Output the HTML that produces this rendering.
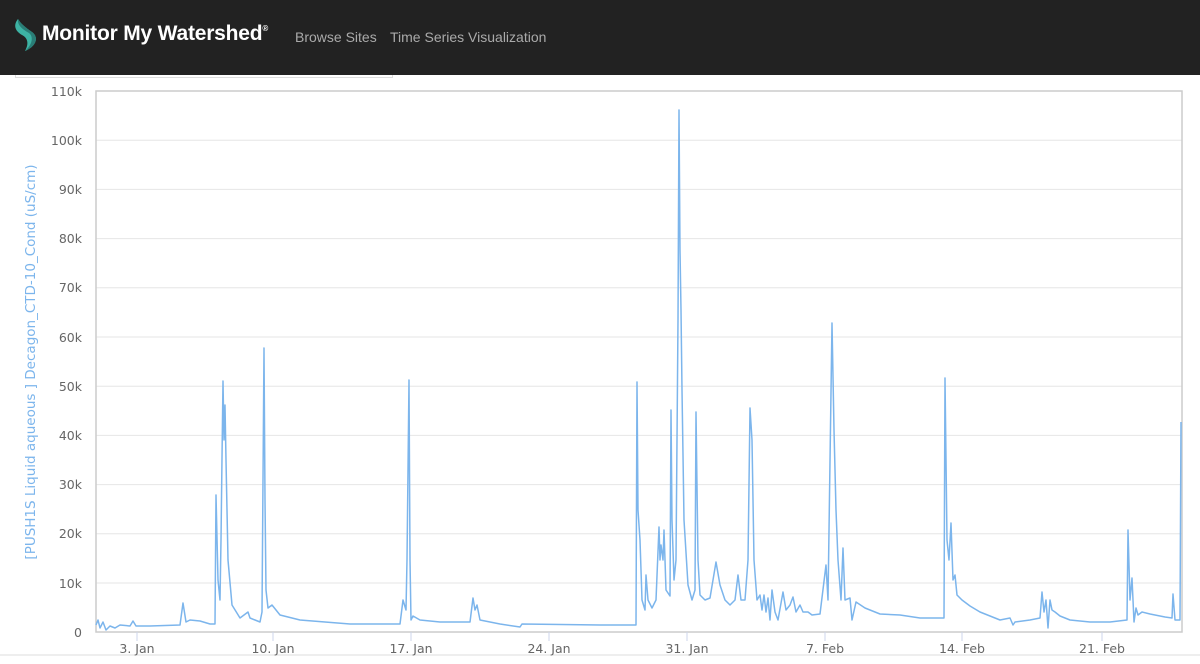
<!DOCTYPE html>
<html><head><meta charset="utf-8"><style>
body{margin:0;width:1200px;height:664px;overflow:hidden;background:#fff;font-family:"Liberation Sans",sans-serif;position:relative}
.hdr{position:absolute;left:0;top:0;width:1200px;height:75px;background:#222}
.brand{position:absolute;left:42px;top:22px;color:#fff;font-weight:bold;font-size:21px;letter-spacing:-0.2px}
.brand sup{font-size:8px;vertical-align:top;position:relative;top:2px}
.nav{position:absolute;top:29px;color:#aaa;font-size:14px}
</style></head><body>
<div class="hdr">
<svg style="position:absolute;left:13px;top:18px" width="30" height="34" viewBox="0 0 30 34">
<path d="M5 1 C0 7 2 13 9 17 C15 20 16 26 12 33 C22 29 27 20 19 14 C12 9 8 6 5 1Z" fill="#3db3a4"/>
<path d="M5 1 C4 8 11 12 16 15 C21 19 19 27 12 33 C22 29 27 20 19 14 C12 9 8 6 5 1Z" fill="#2a7e77"/>
</svg>
<div class="brand">Monitor My Watershed<sup>®</sup></div>
<div class="nav" style="left:295px">Browse Sites</div>
<div class="nav" style="left:390px">Time Series Visualization</div>
</div>
<div style="position:absolute;left:15px;top:75px;width:376px;height:2px;border:1px solid #ddd;border-top:none"></div>
<svg style="position:absolute;left:0;top:0" width="1200" height="664" font-family="DejaVu Sans, sans-serif">
<g stroke="#e6e6e6" stroke-width="1">
<line x1="96" x2="1182" y1="140.2" y2="140.2"/><line x1="96" x2="1182" y1="189.4" y2="189.4"/>
<line x1="96" x2="1182" y1="238.6" y2="238.6"/><line x1="96" x2="1182" y1="287.8" y2="287.8"/>
<line x1="96" x2="1182" y1="337" y2="337"/><line x1="96" x2="1182" y1="386.2" y2="386.2"/>
<line x1="96" x2="1182" y1="435.4" y2="435.4"/><line x1="96" x2="1182" y1="484.6" y2="484.6"/>
<line x1="96" x2="1182" y1="533.8" y2="533.8"/><line x1="96" x2="1182" y1="583" y2="583"/>
</g>
<rect x="96" y="91" width="1086" height="541" fill="none" stroke="#ccc" stroke-width="1.5"/>
<g stroke="#ccd6eb"><line x1="137" x2="137" y1="632" y2="641"/><line x1="273" x2="273" y1="632" y2="641"/><line x1="411" x2="411" y1="632" y2="641"/><line x1="549" x2="549" y1="632" y2="641"/><line x1="687" x2="687" y1="632" y2="641"/><line x1="825" x2="825" y1="632" y2="641"/><line x1="962" x2="962" y1="632" y2="641"/><line x1="1102" x2="1102" y1="632" y2="641"/></g>
<line x1="0" x2="1200" y1="655" y2="655" stroke="#ddd"/>
<g fill="#666" font-size="12.5" text-anchor="end">
<text x="82" y="96">110k</text><text x="82" y="145">100k</text><text x="82" y="194">90k</text><text x="82" y="243">80k</text><text x="82" y="292">70k</text><text x="82" y="342">60k</text><text x="82" y="391">50k</text><text x="82" y="440">40k</text><text x="82" y="489">30k</text><text x="82" y="538">20k</text><text x="82" y="588">10k</text><text x="82" y="637">0</text>
</g>
<g fill="#666" font-size="12.5" text-anchor="middle">
<text x="137" y="653">3. Jan</text><text x="273" y="653">10. Jan</text><text x="411" y="653">17. Jan</text><text x="549" y="653">24. Jan</text><text x="687" y="653">31. Jan</text><text x="825" y="653">7. Feb</text><text x="962" y="653">14. Feb</text><text x="1102" y="653">21. Feb</text>
</g>
<text transform="translate(35,362) rotate(-90)" fill="#7cb5ec" font-size="13.5" text-anchor="middle">[PUSH1S Liquid aqueous ] Decagon_CTD-10_Cond (uS/cm)</text>
<polyline fill="none" stroke="#7cb5ec" stroke-width="1.5" stroke-linejoin="round" points="96,625 98,620 100,628 103,622 106,630 110,626 115,628 120,625 130,626 133,621 136,626 150,626 180,625 183,603 186,622 190,620 200,621 210,624 215,624 216,495 218,580 220,600 221,540 222,458 223,381 224,440 225,405 226,460 228,560 232,605 240,618 248,612 250,618 255,620 260,622 262,612 264,348 265,500 266,590 268,608 272,605 280,615 300,620 350,624 400,624 403,600 406,610 407,560 409,380 410,560 411,620 413,616 420,620 440,622 470,622 473,598 475,610 477,605 480,620 500,624 520,627 522,624 600,625 636,625 637,382 638,510 640,540 642,600 645,610 646,575 648,600 652,608 656,600 659,527 660,560 661,545 663,560 664,530 666,590 670,596 671,410 672,520 674,580 676,560 678,320 679,110 680,250 681,310 682,390 684,520 688,585 692,600 695,590 696,412 698,560 700,595 705,600 710,598 716,562 720,585 725,600 730,605 735,600 738,575 741,600 745,600 748,560 750,408 752,440 754,560 757,600 760,595 762,610 764,595 766,612 768,598 770,620 772,590 775,612 778,620 783,592 786,610 790,605 793,597 796,612 800,605 803,612 808,612 812,615 820,614 826,565 828,600 832,323 834,430 836,510 838,560 841,600 843,548 845,600 850,598 852,620 856,602 865,608 880,614 900,615 920,618 940,618 944,618 945,378 947,540 949,560 951,523 953,580 955,575 957,595 962,600 970,606 980,612 990,616 1000,620 1010,618 1013,625 1015,622 1030,620 1040,618 1042,592 1044,612 1046,600 1048,628 1050,600 1052,610 1055,612 1060,616 1070,620 1090,622 1110,622 1127,620 1128,530 1130,600 1132,578 1134,622 1136,608 1138,615 1142,612 1150,614 1165,617 1172,618 1173,594 1175,620 1180,620 1181,422"/>
</svg>
</body></html>
